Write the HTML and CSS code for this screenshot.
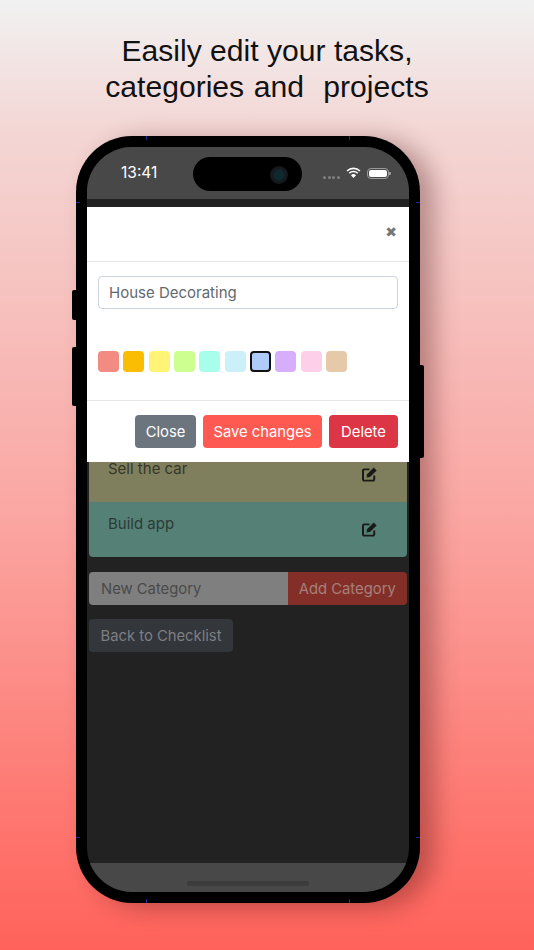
FILE: index.html
```html
<!DOCTYPE html>
<html lang="en">
<head>
<meta charset="utf-8">
<title>Edit categories</title>
<link rel="stylesheet" href="styles.css">
</head>
<body>
<h1 class="headline">Easily edit your tasks,<br><span class="line-two">categories and &nbsp;projects</span></h1>
<div class="phone">
  <span class="side side-silent"></span>
  <span class="side side-volume"></span>
  <span class="side side-power"></span>
  <span class="tick tick-t1"></span><span class="tick tick-t2"></span>
  <span class="tick tick-b1"></span><span class="tick tick-b2"></span>
  <span class="tick tick-l1"></span><span class="tick tick-r1"></span>
  <span class="tick tick-l2"></span><span class="tick tick-r2"></span>
  <div class="screen">
    <div class="status">
      <span class="time">13:41</span>
      <div class="island"><span class="lens"></span></div>
      <div class="status-icons">
        <span class="dots"><i></i><i></i><i></i><i></i></span>
        <svg class="wifi" width="15" height="11" viewBox="0 0 16 12"><path d="M1 4.400a10 10 0 0 1 14 0M3.400 6.800a6.600 6.600 0 0 1 9.200 0" fill="none" stroke="#fff" stroke-width="1.800"/><path d="M8 12L5.200 9a3.900 3.900 0 0 1 5.600 0z" fill="#fff"/></svg>
        <span class="battery"><span class="battery-fill"></span></span>
      </div>
    </div>
    <main class="content">
      <div class="card-list">
        <div class="card card-olive"><span>Sell the car</span>
          <svg class="edit" width="15" height="15" viewBox="0.4 0.8 15.2 15.2"><path d="M12.800 9.500V13.300a1.300 1.300 0 0 1-1.300 1.300H2.700A1.300 1.300 0 0 1 1.400 13.300V4.500A1.300 1.300 0 0 1 2.700 3.200H8" fill="none" stroke="#1a1a1a" stroke-width="2"/><path d="M5 11.500l.5-3.300L12.300 1.400l3 3L8.500 11z" fill="#1a1a1a"/></svg>
        </div>
        <div class="card card-teal"><span>Build app</span>
          <svg class="edit" width="15" height="15" viewBox="0.4 0.8 15.2 15.2"><path d="M12.800 9.500V13.300a1.300 1.300 0 0 1-1.300 1.300H2.700A1.300 1.300 0 0 1 1.400 13.300V4.500A1.300 1.300 0 0 1 2.700 3.200H8" fill="none" stroke="#1a1a1a" stroke-width="2"/><path d="M5 11.500l.5-3.300L12.300 1.400l3 3L8.500 11z" fill="#1a1a1a"/></svg>
        </div>
      </div>
      <div class="add-row">
        <span class="add-input">New Category</span>
        <span class="add-btn">Add Category</span>
      </div>
      <span class="back-btn">Back to Checklist</span>
    </main>
    <div class="homebar"><span class="home-indicator"></span></div>
    <section class="modal">
      <header class="modal-head"><span class="close-x">&#x2716;</span></header>
      <div class="modal-body">
        <div class="name-input">House Decorating</div>
        <div class="swatches">
          <span class="sw s1"></span><span class="sw s2"></span><span class="sw s3"></span><span class="sw s4"></span><span class="sw s5"></span><span class="sw s6"></span><span class="sw s7"></span><span class="sw s8"></span><span class="sw s9"></span><span class="sw s10"></span>
        </div>
      </div>
      <footer class="modal-foot">
        <span class="btn btn-grey">Close</span>
        <span class="btn btn-coral">Save changes</span>
        <span class="btn btn-red">Delete</span>
      </footer>
    </section>
  </div>
</div>
</body>
</html>
```
FILE: styles.css
```css
* { box-sizing: border-box; }
html, body { height: 100%; }
body {
  margin: 0;
  height: 950px;
  overflow: hidden;
  background: linear-gradient(180deg, #f1f1f1 0%, #f3d6d4 14%, #fba5a1 55%, #ff625a 100%);
  font-family: "Inter", "Open Sans", sans-serif;
  display: flex;
  flex-direction: column;
  align-items: center;
}
.headline {
  margin: 33px 0 31px;
  font: 400 30.100px/36px "Liberation Sans", Arial, sans-serif;
  color: #111;
  text-align: center;
  white-space: nowrap;
}
.line-two { word-spacing: 1.300px; }
.phone {
  position: relative;
  flex: none;
  width: 344px;
  height: 767px;
  margin-left: -38px;
  padding: 11px;
  background: #000;
  border-radius: 56px;
  box-shadow: 14px 4px 24px rgba(50, 0, 0, .32);
}
.side { position: absolute; background: #000; }
.side-silent { left: -4px; top: 154px; width: 4px; height: 30px; border-radius: 2px 0 0 2px; }
.side-volume { left: -4px; top: 211px; width: 4px; height: 59px; border-radius: 2px 0 0 2px; }
.side-power { right: -4px; top: 229px; width: 4px; height: 93px; border-radius: 0 2px 2px 0; }
.tick { position: absolute; background: #1c2f8c; }
.tick-t1, .tick-t2, .tick-b1, .tick-b2 { width: 1px; height: 4px; }
.tick-l1, .tick-l2, .tick-r1, .tick-r2 { width: 4px; height: 1px; }
.tick-t1 { left: 70px; top: 0; } .tick-t2 { left: 273px; top: 0; }
.tick-b1 { left: 70px; bottom: 0; } .tick-b2 { left: 273px; bottom: 0; }
.tick-l1 { left: 0; top: 66px; } .tick-r1 { right: 0; top: 66px; }
.tick-l2 { left: 0; top: 701px; } .tick-r2 { right: 0; top: 701px; }
.screen {
  position: relative;
  height: 745px;
  overflow: hidden;
  border-radius: 45px;
  background: #222;
  display: flex;
  flex-direction: column;
}
.status {
  height: 52px;
  flex: none;
  background: #484848;
  display: flex;
  align-items: flex-start;
  padding: 10px 0 0 34px;
}
.time { margin-top: 7px; width: 72px; color: #fff; font: 400 15.500px/18px "Inter", sans-serif; }
.island {
  width: 109px;
  height: 34px;
  border-radius: 17px;
  background: #000;
  display: flex;
  justify-content: flex-end;
  align-items: center;
  padding-right: 14px;
}
.lens { width: 18px; height: 18px; margin-top: 2px; border-radius: 50%; background: radial-gradient(circle, #0c2a30 0 30%, #17171b 60%); }
.status-icons { margin-left: 21px; margin-top: 9px; display: flex; align-items: center; }
.dots { display: flex; gap: 1.500px; margin-top: 9px; margin-right: 6px; }
.dots i { width: 3px; height: 3px; border-radius: 50%; background: #7f7f7f; }
.battery { position: relative; width: 22px; height: 11px; margin-left: 6px; margin-top: 2px; border: 1px solid #9a9a9a; border-radius: 4px; padding: 1px; }
.battery::after { content: ""; position: absolute; right: -3px; top: 3px; width: 1.500px; height: 3px; background: #9a9a9a; border-radius: 0 1px 1px 0; }
.battery-fill { display: block; height: 100%; background: #fff; border-radius: 2px; }
.content {
  flex: 1;
  padding: 262px 2px 0;
  display: flex;
  flex-direction: column;
  align-items: flex-start;
  min-height: 0;
}
.card-list { width: 100%; height: 96px; flex: none; border-radius: 0 0 4px 4px; overflow: hidden; }
.card {
  height: 55px;
  padding: 13px 30px 0 19px;
  display: flex;
  justify-content: space-between;
  color: #2e3a36;
  font-size: 15px;
  line-height: 18px;
}
.card .edit { margin-top: 7px; }
.card-olive { height: 41px; padding-top: 1px; background: #7f7f5d; color: #37372a; line-height: 14px; }
.card-olive .edit { margin-top: 5px; }
.card-teal { background: #548075; }
.add-row { width: 100%; height: 33px; flex: none; margin-top: 15px; display: flex; border-radius: 4px; overflow: hidden; font-size: 14.800px; line-height: 34px; }
.add-input { flex: 1; background: #7f7f7f; color: #4a4a4a; padding-left: 12px; }
.add-btn { width: 119.500px; background: #832f28; color: #a57f7c; text-align: center; }
.back-btn { margin-top: 14px; height: 33px; flex: none; width: 144px; background: #33363b; color: #7d7f82; border-radius: 4px; font-size: 14.800px; line-height: 34px; text-align: center; }
.homebar { height: 29px; flex: none; background: #484848; display: flex; justify-content: center; padding-top: 18px; }
.home-indicator { width: 122px; height: 5px; border-radius: 3px; background: #3c3c3c; }
.modal {
  position: absolute;
  left: 0;
  right: 0;
  top: 60px;
  height: 255px;
  background: #fff;
  display: flex;
  flex-direction: column;
}
.modal-head { height: 55px; flex: none; border-bottom: 1px solid #e6e6e6; display: flex; justify-content: flex-end; padding: 16px 12px 0 0; }
.close-x { color: #777; font-size: 14px; line-height: 18px; font-family: "DejaVu Sans", sans-serif; font-weight: 700; }
.modal-body { flex: 1; padding: 14px 11px 0; }
.name-input { height: 33px; border: 1px solid #ced4da; border-radius: 4px; padding-left: 10px; font-size: 15px; line-height: 32px; color: #62696f; }
.swatches { margin-top: 42px; display: flex; gap: 4.350px; }
.sw { width: 21px; height: 21px; border-radius: 4px; }
.s1 { background: #f28b82; } .s2 { background: #fbbc04; } .s3 { background: #fff475; } .s4 { background: #ccff90; } .s5 { background: #a7ffeb; }
.s6 { background: #cbf0f8; } .s7 { background: #aecbfa; border: 2px solid #111; } .s8 { background: #d7aefb; } .s9 { background: #fdcfe8; } .s10 { background: #e6c9a8; }
.modal-foot { height: 62px; flex: none; border-top: 1px solid #e6e6e6; display: flex; justify-content: flex-end; gap: 7px; padding: 14px 11px 0; }
.btn { height: 33px; border-radius: 4px; color: #fff; font-size: 14.800px; line-height: 34px; text-align: center; }
.btn-grey { width: 61px; background: #6c757d; }
.btn-coral { width: 119px; background: #ff5a51; }
.btn-red { width: 69px; background: #dc3545; }
```
